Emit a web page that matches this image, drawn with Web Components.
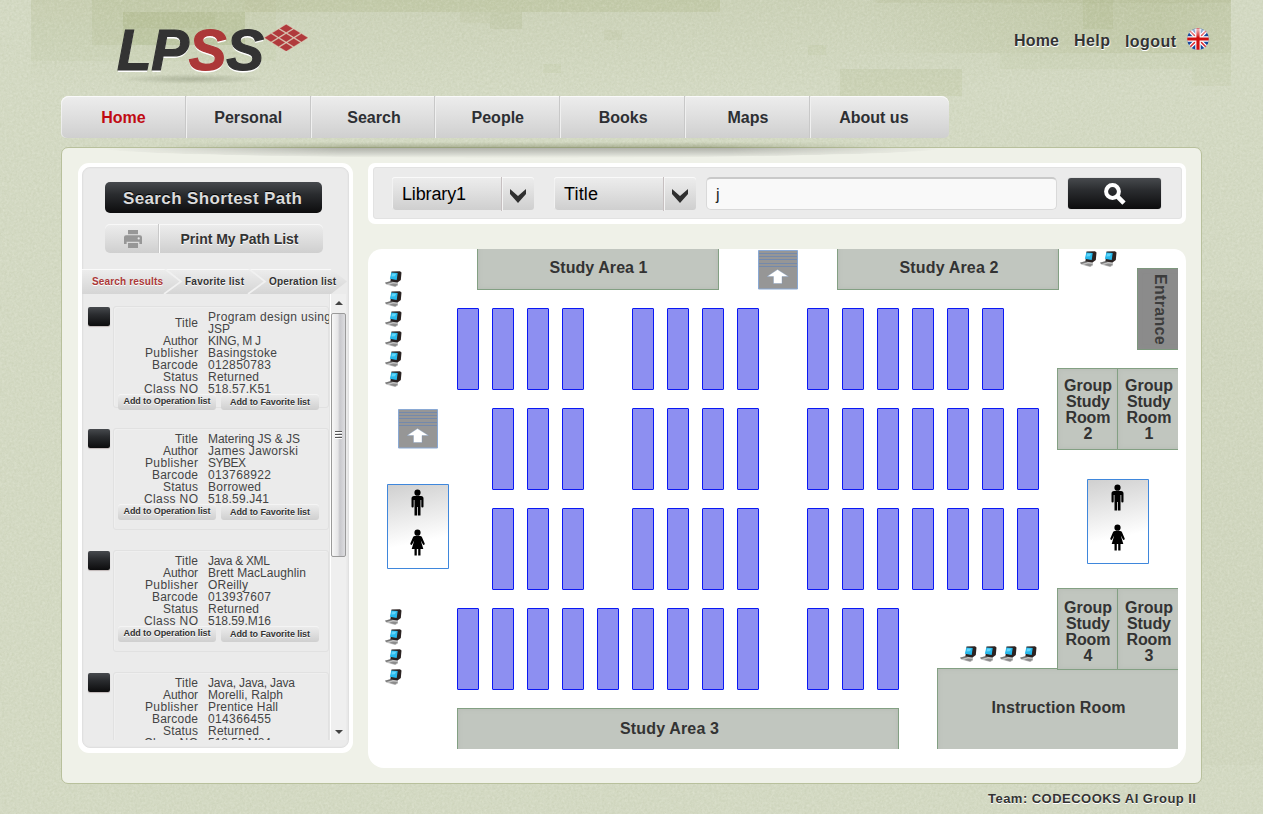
<!DOCTYPE html>
<html lang="en">
<head>
<meta charset="utf-8">
<title>LPSS</title>
<style>
html,body{margin:0;height:100%;overflow:hidden}
body{font-family:"Liberation Sans",Arial,sans-serif;color:#333;background:#d2d8c2}
</style>
</head>
<body>
<lpss-app></lpss-app>
<script>
const define = (name, html, setup) => customElements.define(name, class extends HTMLElement {
  constructor(){ super(); this.attachShadow({mode:'open'}); }
  connectedCallback(){
    if (this.done) return; this.done = true;
    this.shadowRoot.innerHTML = typeof html === 'function' ? html(this) : html;
    if (setup) setup(this);
  }
});
const GREY = 'linear-gradient(#ededed,#e0e0e0 45%,#cfcfcf)';
const DARK = 'linear-gradient(#474a4e,#2a2c2f 40%,#0c0c0d)';

/* text whose tracking is set so that it takes the width in its "w" attribute */
define('fit-text', `<style>:host{display:inline-block;white-space:nowrap}</style><slot></slot>`, el => {
  const w = +el.getAttribute('w'), n = el.textContent.length;
  const now = el.getBoundingClientRect().width;
  if (w && now) { const s = (w - now) / (n - 1); el.style.letterSpacing = s + 'px'; el.style.marginRight = -s + 'px'; }
});

define('paper-texture', `<style>:host{display:block;position:absolute;inset:0;z-index:-1}svg{display:block}</style>
<svg width="1263" height="814">
<defs>
<filter id="n" x="0" y="0" width="100%" height="100%"><feTurbulence type="fractalNoise" baseFrequency=".42" numOctaves="3" seed="4"/><feColorMatrix values="0 0 0 0 .40  0 0 0 0 .44  0 0 0 0 .25  .9 .5 0 0 -.58"/></filter>
<filter id="m" x="0" y="0" width="100%" height="100%"><feTurbulence type="fractalNoise" baseFrequency=".4" numOctaves="3" seed="9"/><feColorMatrix values="0 0 0 0 1  0 0 0 0 1  0 0 0 0 .9  .9 .5 0 0 -.58"/></filter>
<linearGradient id="f" x1="0" y1="0" x2="0" y2="1"><stop offset="0" stop-color="#a4ad82" stop-opacity=".18"/><stop offset="1" stop-color="#a4ad82" stop-opacity="0"/></linearGradient>
<linearGradient id="r" x1="0" y1="0" x2="1" y2="0"><stop offset="0" stop-color="#a2ad78" stop-opacity="0"/><stop offset=".8" stop-color="#a2ad78" stop-opacity=".3"/><stop offset="1" stop-color="#a2ad78" stop-opacity=".2"/></linearGradient>
</defs>
<rect width="1263" height="814" fill="#d3d9c3"/>
<g fill="#a2ad78">
<rect x="31" width="1200" height="90" fill="url(#f)"/>
<rect x="31" width="245" height="61" opacity=".08"/>
<rect x="92" width="153" height="45" opacity=".15"/>
<rect x="123" y="12" width="122" height="33" opacity=".2"/>
<rect x="123" y="12" width="92" height="16" opacity=".14"/>
<rect x="245" width="475" height="12" opacity=".22"/>
<rect x="490" y="12" width="32" height="17" opacity=".18"/>
<rect x="460" y="12" width="30" height="11" opacity=".1"/>
<rect x="604" y="30" width="18" height="10" opacity=".12"/>
<rect x="543" y="64" width="18" height="9" opacity=".1"/>
<rect x="808" y="45" width="18" height="10" opacity=".1"/>
<rect x="840" y="69" width="122" height="27" opacity=".16"/>
<rect x="875" y="0" width="356" height="3" opacity=".14"/>
<rect x="860" y="0" width="371" height="53" fill="url(#r)"/>
<rect x="1083" y="0" width="30" height="29" opacity=".16"/>
<rect x="1000" y="53" width="192" height="16" opacity=".08"/>
<rect x="1192" y="53" width="39" height="33" opacity=".1"/>
<rect x="1202" y="290" width="61" height="475" opacity=".05"/>
</g>
<rect width="1263" height="814" filter="url(#n)" opacity=".3"/>
<rect width="1263" height="814" filter="url(#m)" opacity=".32"/>
</svg>`);

define('lpss-logo', `<style>
:host{display:block;width:200px;height:66px;position:relative}
.t{position:absolute;left:0;top:-3px;font:italic bold 56.500px/64px "Liberation Sans",sans-serif;color:#333;text-shadow:0 1px 0 #fff,0 2px 0 #fff;-webkit-text-stroke:1.200px currentColor}
b{color:#ac3838}
svg{position:absolute;left:147px;top:2px}
i{position:absolute;left:0;top:52px;width:150px;height:10px;background:radial-gradient(closest-side,rgba(80,90,60,.28),transparent)}
</style><i></i><div class="t"><fit-text w="147">LP<b>S</b>S</fit-text></div>
<svg width="45" height="27" viewBox="0 0 45 27"><g fill="#b03a3c" stroke="#e9c9bb" stroke-width=".4" id="g"></g></svg>`, el => {
  let s = '';
  for (let a = 0; a < 3; a++) for (let b = 0; b < 3; b++) {
    const x = 22.2 + (a - b) * 7.6, y = 4.4 + (a + b) * 4.7;
    s += `<path d="M${x-6.8} ${y}L${x} ${y-4.2}L${x+6.8} ${y}L${x} ${y+4.2}Z"/>`;
  }
  el.shadowRoot.getElementById('g').innerHTML = s;
});

define('uk-flag', `<style>:host{display:block;width:22px;height:22px}svg{display:block}</style>
<svg width="22" height="22" viewBox="0 0 22 22"><defs><clipPath id="c"><circle cx="11" cy="11" r="10.8"/></clipPath><linearGradient id="s" x1="0" y1="0" x2="0" y2="1"><stop offset="0" stop-color="#fff" stop-opacity=".75"/><stop offset="1" stop-color="#fff" stop-opacity=".1"/></linearGradient></defs>
<g clip-path="url(#c)"><path fill="#17479a" d="M0 0h22v22H0z"/><path d="M0 0L22 22M22 0L0 22" stroke="#fff" stroke-width="4"/><path d="M0 0L22 22M22 0L0 22" stroke="#d8262c" stroke-width="1.500"/><path d="M11 0V22M0 11H22" stroke="#fff" stroke-width="5.400"/><path d="M11 0V22M0 11H22" stroke="#d0100f" stroke-width="3.200"/><ellipse cx="11" cy="4.600" rx="8" ry="4.200" fill="url(#s)"/></g></svg>`);

define('top-links', `<style>
:host{display:flex;align-items:flex-start;font:bold 16px/20px "Liberation Sans",sans-serif;color:#333;text-shadow:0 1px 0 #fff,1px 1px 0 rgba(255,255,255,.6)}
span{display:block}.h{margin-right:15px}.p{margin-right:15px}.o{margin-top:1px;margin-right:11px}uk-flag{margin-top:-3px}
</style><span class="h"><fit-text w="45">Home</fit-text></span><span class="p"><fit-text w="36">Help</fit-text></span><span class="o"><fit-text w="51">logout</fit-text></span><uk-flag></uk-flag>`);

define('nav-bar', `<style>
:host{display:grid;grid-template-columns:repeat(6,124.800px) 1fr;width:888px;height:42px;border-radius:8px 8px 5px 5px;background:${GREY};box-shadow:inset 0 1px 0 #fafafa,inset 1px 0 0 rgba(255,255,255,.5);overflow:hidden}
div{display:flex;justify-content:center;align-items:center;font:bold 16px/20px "Liberation Sans",sans-serif;color:#2d2f33;border-right:1px solid #c8c8c8;box-shadow:inset 1px 0 0 #f0f0f0;box-sizing:border-box;padding:1px 0 0 1px}
.on{color:#c00a12;box-shadow:none}.last{border-right:0;padding-right:12px}
</style><div class="on">Home</div><div><fit-text w="68">Personal</fit-text></div><div style="padding-left:3px">Search</div><div>People</div><div style="padding-left:2px">Books</div><div style="padding-left:2px">Maps</div><div class="last">About us</div>`);

define('print-icon', `<style>:host{display:block}svg{display:block}</style><svg width="18" height="18" viewBox="0 0 18 18"><path fill="#979797" d="M4 0h10v4.300H4zM2 5.300h14a2 2 0 0 1 2 2V14h-2.600v-2.200H2.600V14H0V7.300a2 2 0 0 1 2-2zM4 13h10v5H4z"/><circle cx="14.700" cy="8.400" r="1.100" fill="#e8e8e8"/></svg>`);

define('book-card', el => {
  const d = JSON.parse(el.getAttribute('data'));
  const L = [['Title',23],['Author',35],['Publisher',53],['Barcode',46],['Status',35],['Class NO',54]];
  return `<style>
:host{display:grid;grid-template-columns:22px 216px;column-gap:3px;height:122px;padding-left:6px;box-sizing:border-box}
.c{width:22px;height:19px;margin-top:1px;border-radius:2px;background:${DARK};box-shadow:0 1px 1px #bfb6b6}
.b{height:102px;box-sizing:border-box;border:1px solid #e1e1e1;border-radius:3px;box-shadow:inset 1px 1px 0 #efefef;padding-top:4px}
.r{display:grid;grid-template-columns:84px 1fr;column-gap:10px;font:12px/12px "Liberation Sans",sans-serif;color:#444;align-items:center}
.r>:first-child{text-align:right}.v{white-space:nowrap}
.v fit-text{display:block;width:max-content}
.a{display:flex;gap:5px;padding:0 0 0 4px;margin-top:-1px}
.a div{width:98px;height:16px;border-radius:3px;background:${GREY};box-shadow:inset 0 1px 0 #f4f4f4;font:bold 9px/15px "Liberation Sans",sans-serif;color:#333;text-align:center;text-shadow:0 1px 0 #fff}
.a div+div{line-height:17px}
</style><div class="c"></div><div class="b">${L.map((l,i)=>`<div class="r"><div><fit-text w="${l[1]}">${l[0]}</fit-text></div><div class="v">${d[i].map(v=>`<fit-text w="${v[1]}">${v[0]}</fit-text>`).join('')}</div></div>`).join('')}
<div class="a"><div><fit-text w="87">Add to Operation list</fit-text></div><div><fit-text w="80">Add to Favorite list</fit-text></div></div></div>`;
});

define('scroll-bar', `<style>
:host{display:flex;flex-direction:column;align-items:center;width:16px;height:446px;box-sizing:border-box;background:#efefef;border-left:1px solid #fff;box-shadow:-1px 0 0 #e4e4e4}
svg{display:block;flex:none}.u{height:19px;padding-top:7px;box-sizing:border-box}.d{margin-top:auto;padding-bottom:6px}
.t{width:15px;height:244px;box-sizing:border-box;border:1px solid #9a9a9a;border-radius:2px;background:linear-gradient(90deg,#f7f7f7,#e5e5e7 45%,#c8c8cc 60%,#dcdcdf);display:flex;align-items:center;justify-content:center}
</style><svg class="u" width="8" height="12"><path d="M0 4L4 0L8 4Z" fill="#444"/></svg><div class="t"><svg width="7" height="8"><path d="M0 .5h7M0 3.500h7M0 6.500h7" stroke="#555"/><path d="M0 1.500h7M0 4.500h7M0 7.500h7" stroke="#fff"/></svg></div><svg class="d" width="8" height="4"><path d="M0 0L4 4L8 0Z" fill="#444"/></svg>`);

const books = [
 [[['Program design using',123],['JSP',22]],[['KING, M J',53]],[['Basingstoke',69]],[['012850783',63]],[['Returned',51]],[['518.57.K51',63]]],
 [[['Matering JS &amp; JS',92]],[['James Jaworski',90]],[['SYBEX',38]],[['013768922',63]],[['Borrowed',53]],[['518.59.J41',61]]],
 [[['Java &amp; XML',62]],[['Brett MacLaughlin',98]],[['OReilly',40]],[['013937607',63]],[['Returned',51]],[['518.59.M16',63]]],
 [[['Java, Java, Java',87]],[['Morelli, Ralph',75]],[['Prentice Hall',70]],[['014366455',63]],[['Returned',51]],[['518.59.M84',63]]]];

define('side-panel', `<style>
:host{display:block;width:275px;height:590px;box-sizing:border-box;border-radius:11px;background:#fff;padding:4px 4px 5px}
.in{height:581px;box-sizing:border-box;border-radius:8px;background:#ebebeb;border:1px solid #e0e0e0;padding-top:14px;box-shadow:inset 0 0 0 1px #e8e8e8}
.s{margin-left:22px;width:217px;height:31px;border-radius:5px;background:${DARK};color:#dcdcdc;font:bold 17px/33px "Liberation Sans",sans-serif;text-align:center;text-shadow:0 -1px 0 #000;text-indent:-1px}
.p{margin:11px 0 0 22px;width:218px;height:29px;display:grid;grid-template-columns:55px 1fr;border-radius:5px;background:${GREY};box-shadow:inset 0 1px 0 #f8f8f8;font:bold 14px/29px "Liberation Sans",sans-serif;text-shadow:0 1px 0 #fff}
.p div{display:grid;place-items:center}.p div:first-child{border-right:1px solid #fafafa;box-shadow:inset -1px 0 0 #c9c9c9;padding-left:2px}
.p .x{padding:2px 4px 0 0;line-height:27px}
.tabs{position:relative;margin:16px 0 0 -1px;height:25px;font:bold 10px/25px "Liberation Sans",sans-serif}
.tabs svg{position:absolute;left:0;top:0}
.l{position:relative;display:grid;grid-template-columns:84px 84px auto;padding-left:10px;text-shadow:0 1px 0 #fff}
.l>:first-child{color:#ac3838}.l>:nth-child(2){padding-left:9px}.l>:nth-child(3){padding-left:9px}
.list{display:grid;grid-template-columns:248px 16px;height:446px;overflow:hidden;margin-left:-1px}
.c{overflow:hidden;height:446px;padding-top:12px;box-sizing:border-box}
</style><div class="in"><div class="s"><fit-text w="178">Search Shortest Path</fit-text></div>
<div class="p"><div><print-icon></print-icon></div><div class="x"><fit-text w="118">Print My Path List</fit-text></div></div>
<div class="tabs"><svg width="266" height="25"><defs><linearGradient id="g" x1="0" y1="0" x2="0" y2="1"><stop offset="0" stop-color="#ededed"/><stop offset="1" stop-color="#d5d5d5"/></linearGradient></defs><path fill="url(#g)" d="M0 0H249L265 12.500L249 25H0Z"/><path d="M0 .5H249" stroke="#f9f9f9"/><path d="M83 0L99 12.500L82 25M167 0L183 12.500L166 25" fill="none" stroke="#f1f1f1" stroke-width="1.700"/></svg>
<div class="l"><div><fit-text w="71">Search results</fit-text></div><div><fit-text w="59">Favorite list</fit-text></div><div><fit-text w="67">Operation list</fit-text></div></div></div>
<div class="list"><div class="c"></div><scroll-bar></scroll-bar></div></div>`, el => {
  const c = el.shadowRoot.querySelector('.c');
  for (const b of books) { const k = document.createElement('book-card'); k.setAttribute('data', JSON.stringify(b)); c.append(k); }
});

define('drop-down', `<style>
:host{display:grid;grid-template-columns:110px 1fr;width:142px;height:33px;border-radius:3px;background:${GREY};box-shadow:inset 0 1px 0 #fafafa,inset 1px 0 0 #f2f2f2}
.t{padding-left:10px;font:18px/34px "Liberation Sans",sans-serif;color:#000;border-right:1px solid #c6bfc0}
.a{display:grid;place-items:center;border-left:1px solid #f4f4f4;padding:2px 1px 0 0;margin-top:1px}
</style><div class="t"><slot></slot></div><div class="a"><svg width="16" height="14"><path d="M0 0L8 7L16 0V5L8 14L0 5Z" fill="#303030"/></svg></div>`);

define('search-bar', `<style>
:host{display:block;width:818px;height:61px;box-sizing:border-box;background:#fff;border-radius:7px;padding:4px 4px 5px 5px}
.in{height:52px;box-sizing:border-box;background:#ebebeb;border:1px solid #e2e2e2;border-radius:3px;display:flex;padding:9px 0 0 18px}
drop-down{margin-right:20px}drop-down+drop-down{margin-right:10px}
.i{width:351px;height:33px;box-sizing:border-box;border:1px solid #d9d9d9;border-top:2px solid #c9c9c9;border-radius:5px;background:#f9f9f9;font:16px/31px "Liberation Sans",sans-serif;color:#222;padding-left:9px}
.b{margin:1px 0 0 11px;width:93px;height:31px;border-radius:3px;background:${DARK};display:grid;place-items:center;box-shadow:0 0 1px #888}
</style><div class="in"><drop-down><fit-text w="64">Library1</fit-text></drop-down><drop-down><fit-text w="34">Title</fit-text></drop-down><div class="i">j</div><div class="b"><svg width="22" height="22" viewBox="0 0 22 22"><circle cx="8.500" cy="8.500" r="6.400" fill="none" stroke="#fff" stroke-width="4"/><path d="M12.800 12.800L20 20.200" stroke="#fff" stroke-width="4.600"/></svg></div></div>`);

/* floor-plan items: each one sits at its own point of the plan */
define('pc-icon', `<style>:host{display:block}svg{display:block}</style><svg width="18" height="18" viewBox="0 0 18 18"><path d="M0 12.600L8 10.500L13 12.500L13 15.600L10 17L1 14.600Z" fill="#c4c4c4"/><path d="M0 12.800L6 11L7.500 12.200L1.400 14Z" fill="#777"/><path d="M4 14.800L8 13.400L13 14L10.400 16.400Z" fill="#8c8c8c"/><path d="M6.500 1.600L15 1.200L16.500 2.600L15.800 10L12.500 12.600L5.400 11.400Z" fill="#2b2322"/><path d="M6.300 2.600L12.700 3.100L11.700 9.900L4.900 8.800Z" fill="#28b9ec"/><path d="M7.300 3.400L11.300 3.700L9.800 6.200L6.500 6.600Z" fill="#62d6fa"/></svg>`);
define('lift-icon', `<style>:host{display:block}svg{display:block}</style><svg width="40" height="40"><path d="M.5.5h39v38.500H.5z" fill="#969696" stroke="#8aa9d4"/><path d="M1 3.500h38M1 6.500h38M1 9.500h38M1 13.500h38M1 16.500h38" stroke="#7489ab"/><path d="M19.500 19.500L30.500 26.500H24V33.500H15.500V26.500H9Z" fill="#fff" stroke="#7e9ac0" stroke-width=".4"/></svg>`);
define('toilet-icon', `<style>:host{display:block}svg{display:block}</style><svg width="62" height="86"><defs><linearGradient id="g" x1="0" y1="0" x2=".15" y2="1"><stop offset="0" stop-color="#cfcfcf"/><stop offset=".75" stop-color="#fff"/></linearGradient></defs><path d="M.5.5h61v84H.5z" fill="url(#g)" stroke="#3f87dc"/>
<circle cx="30.500" cy="8.700" r="3.100"/><path d="M27 12h7q2.500 0 2.500 2.500V22.500q0 1-1.100 1t-1.100-1V16h-.8V31.500h-2.600V23h-.8v8.500h-2.600V16h-.8v6.500q0 1-1.100 1t-1.100-1V14.500q0-2.500 2.500-2.500Z"/>
<circle cx="30.500" cy="48.700" r="3.100"/><path d="M28 52h5q1.500 0 2 1.200L37.700 59.500q.3 1-.6 1.300t-1.300-.5L33.800 56.500L36.300 65H33.500V71.500H31.200V65H29.800V71.500H27.500V65H24.700L27.200 56.500L25.200 60.300q-.5.900-1.300.5t-.6-1.300L26 53.200Q26.500 52 28 52Z"/></svg>`);

define('floor-plan', `<style>
:host{display:block;width:818px;height:519px;box-sizing:border-box;background:#fff;border-radius:14px 12px 20px 16px;padding:0 8px 19px 10px}
.m{position:relative;width:800px;height:500px;overflow:hidden}
.m>*{position:absolute;box-sizing:border-box}
.s{width:22px;height:82px;border:1px solid #0a18f4;border-radius:1px;background:#8d8ff1}
.r{border:1px solid #83a083;background:#c1c6bf;font:bold 16px/16px "Liberation Sans",sans-serif;color:#333;text-align:center;box-shadow:inset 0 0 5px rgba(150,155,150,.25)}
.e{writing-mode:vertical-rl;color:#3c3c3c}
</style><div class="m"></div>`, el => {
  const m = el.shadowRoot.querySelector('.m');
  let h = '';
  const put = (tag, x, y, extra='', body='') => h += `<${tag} ${extra.includes('class')?extra.split('|')[0]:''} style="left:${x-378}px;top:${y-249}px;${extra.split('|')[1]||''}">${body}</${tag}>`;
  const range = (a, b) => { const r = []; for (let x = a; x <= b; x += 35) r.push(x); return r; };
  [[308, [...range(457,562), ...range(632,737), ...range(807,982)]],
   [408, [...range(492,562), ...range(632,737), ...range(807,1017)]],
   [508, [...range(492,562), ...range(632,737), ...range(807,1017)]],
   [608, [...range(457,737), ...range(807,877)]]].forEach(([y, xs]) => xs.forEach(x => put('div', x, y, 'class="s"|')));
  const room = (x, y, w, ht, pad, lines, more='') => put('div', x, y, `class="r"|width:${w}px;height:${ht}px;padding-top:${pad}px;${more}`, lines.map(([t, tw]) => `<div><fit-text w="${tw}">${t}</fit-text></div>`).join(''));
  room(477,240,242,50,19,[['Study Area 1',98]],'padding-left:1px;');
  room(837,240,222,50,19,[['Study Area 2',99]],'padding-left:2px;');
  room(457,708,442,50,12,[['Study Area 3',99]],'padding-right:17px;');
  room(937,668,250,90,31,[['Instruction Room',134]],'padding-right:7px;');
  const g = n => [['Group',48],['Study',44],['Room',45],[n,0]];
  room(1057,368,62,82,9,g('2'));
  room(1117,368,70,82,9,g('1'),'padding-right:6px;');
  room(1057,588,62,82,11,g('4'));
  room(1117,588,70,82,11,g('3'),'padding-right:6px;');
  put('div',1137,268,'class="r e"|width:50px;height:82px;border-color:#7d977d;background:#8b8b8b;padding:5px 4px 0 0;text-align:left;display:flex;align-items:flex-start;justify-content:center;flex-direction:column','<div style="letter-spacing:.3px">Entrance</div>');
  for (let i = 0; i < 6; i++) put('pc-icon', 385, 270 + i*20);
  for (let i = 0; i < 4; i++) { put('pc-icon', 385, 608 + i*20); put('pc-icon', 960 + i*20, 645); }
  put('pc-icon',1080,250); put('pc-icon',1100,250);
  put('lift-icon',758,250); put('lift-icon',398,409);
  put('toilet-icon',387,484); put('toilet-icon',1087,479);
  m.innerHTML = h;
});

define('lpss-app', `<style>
:host{display:block;position:relative;z-index:0;width:1263px;height:814px;overflow:hidden}
header{display:flex;justify-content:space-between;height:96px;padding:22px 54px 0 117px;box-sizing:border-box}
top-links{margin-top:9px}
nav-bar{margin-left:61px}
main{position:relative;margin:9px 0 0 61px;width:1141px;height:637px;box-sizing:border-box;border:1px solid #b8c09c;border-radius:7px;background:#eff1e8;display:grid;grid-template-columns:275px 818px;column-gap:15px;padding:15px 0 0 16px;align-items:start}
.sh,.glow{position:absolute;-webkit-mask:linear-gradient(90deg,transparent,#000 28%,#000 75%,transparent);mask:linear-gradient(90deg,transparent,#000 28%,#000 75%,transparent)}
.sh{left:40px;top:0;width:840px;height:10px;background:linear-gradient(rgba(90,92,86,.42),rgba(100,102,96,.24) 50%,transparent);border-radius:0 0 50% 50%/0 0 10px 10px}
.glow{left:90px;top:-6px;width:740px;height:6px;background:linear-gradient(transparent,rgba(110,118,80,.45))}
.col{display:grid;row-gap:25px}
footer{padding:7px 67px 0 0;text-align:right;font:bold 13px/16px "Liberation Sans",sans-serif;text-shadow:0 1px 0 #fff}
</style><paper-texture></paper-texture>
<header><lpss-logo></lpss-logo><top-links></top-links></header>
<nav-bar></nav-bar>
<main><div class="sh"></div><div class="glow"></div><side-panel></side-panel><div class="col"><search-bar></search-bar><floor-plan></floor-plan></div></main>
<footer><fit-text w="208">Team: CODECOOKS AI Group II</fit-text></footer>`);
</script>
</body>
</html>
